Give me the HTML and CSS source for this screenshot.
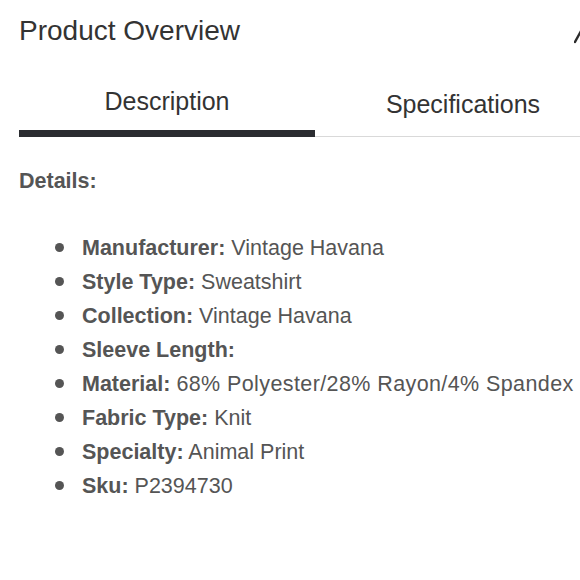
FILE: index.html
```html
<!DOCTYPE html>
<html lang="en">
<head>
<meta charset="utf-8">
<title>Product Overview</title>
<link rel="stylesheet" href="styles.css">
</head>
<body>
<div class="page">
  <div class="header">
    <h1 class="title">Product Overview</h1>
    <svg class="chevron" width="14" height="14" viewBox="0 0 14 14" aria-hidden="true">
      <polyline points="1,12 7,1 13,12" fill="none" stroke="#2b2b2b" stroke-width="2.4" stroke-linecap="round" stroke-linejoin="round"/>
    </svg>
  </div>
  <div class="tabs">
    <div class="tab active">Description</div>
    <div class="tab">Specifications</div>
  </div>
  <div class="content">
    <div class="details-label">Details:</div>
    <ul class="specs">
      <li><b>Manufacturer:</b> Vintage Havana</li>
      <li><b>Style Type:</b> Sweatshirt</li>
      <li><b>Collection:</b> Vintage Havana</li>
      <li><b>Sleeve Length:</b></li>
      <li><b>Material:</b> <span class="wide">68% Polyester/28% Rayon/4% Spandex</span></li>
      <li><b>Fabric Type:</b> Knit</li>
      <li><b>Specialty:</b> Animal Print</li>
      <li><b>Sku:</b> P2394730</li>
    </ul>
  </div>
</div>
</body>
</html>
```

FILE: styles.css
```css
html, body {
  margin: 0;
  padding: 0;
  background: #ffffff;
  overflow: hidden;
}

body {
  width: 580px;
  height: 580px;
  font-family: "Liberation Sans", Arial, Helvetica, sans-serif;
}

.page {
  width: 630px;
  padding-left: 19px;
  box-sizing: border-box;
}

.header {
  display: flex;
  justify-content: space-between;
  align-items: flex-start;
  padding-top: 15px;
}

.title {
  margin: 0;
  font-size: 28px;
  line-height: 32px;
  font-weight: normal;
  color: #333333;
}

.chevron {
  margin-top: 15px;
  margin-right: 42px;
}

.tabs {
  display: flex;
  margin-top: 13px;
  height: 76px;
  border-bottom: 1px solid #d9d9d9;
}

.tab {
  flex: 0 0 296px;
  box-sizing: border-box;
  text-align: center;
  font-size: 25px;
  line-height: 30px;
  color: #333333;
  padding-top: 29px;
}

.tab.active {
  padding-top: 26px;
  height: 77px;
  border-bottom: 7px solid #2a2c30;
  margin-bottom: -1px;
}

.content {
  color: #555555;
  font-size: 21.5px;
}

.details-label {
  margin-top: 31px;
  font-weight: bold;
  line-height: 26px;
}

.specs {
  list-style: none;
  margin: 37px 0 0 0;
  padding: 0 0 0 63px;
}

.specs li {
  line-height: 34px;
  white-space: nowrap;
}

.specs li::before {
  content: "";
  display: inline-block;
  width: 9px;
  height: 9px;
  border-radius: 50%;
  background: #555555;
  margin-left: -27px;
  margin-right: 18px;
  vertical-align: 3px;
}

.specs b {
  font-weight: bold;
}

.wide {
  letter-spacing: 0.4px;
}
```
